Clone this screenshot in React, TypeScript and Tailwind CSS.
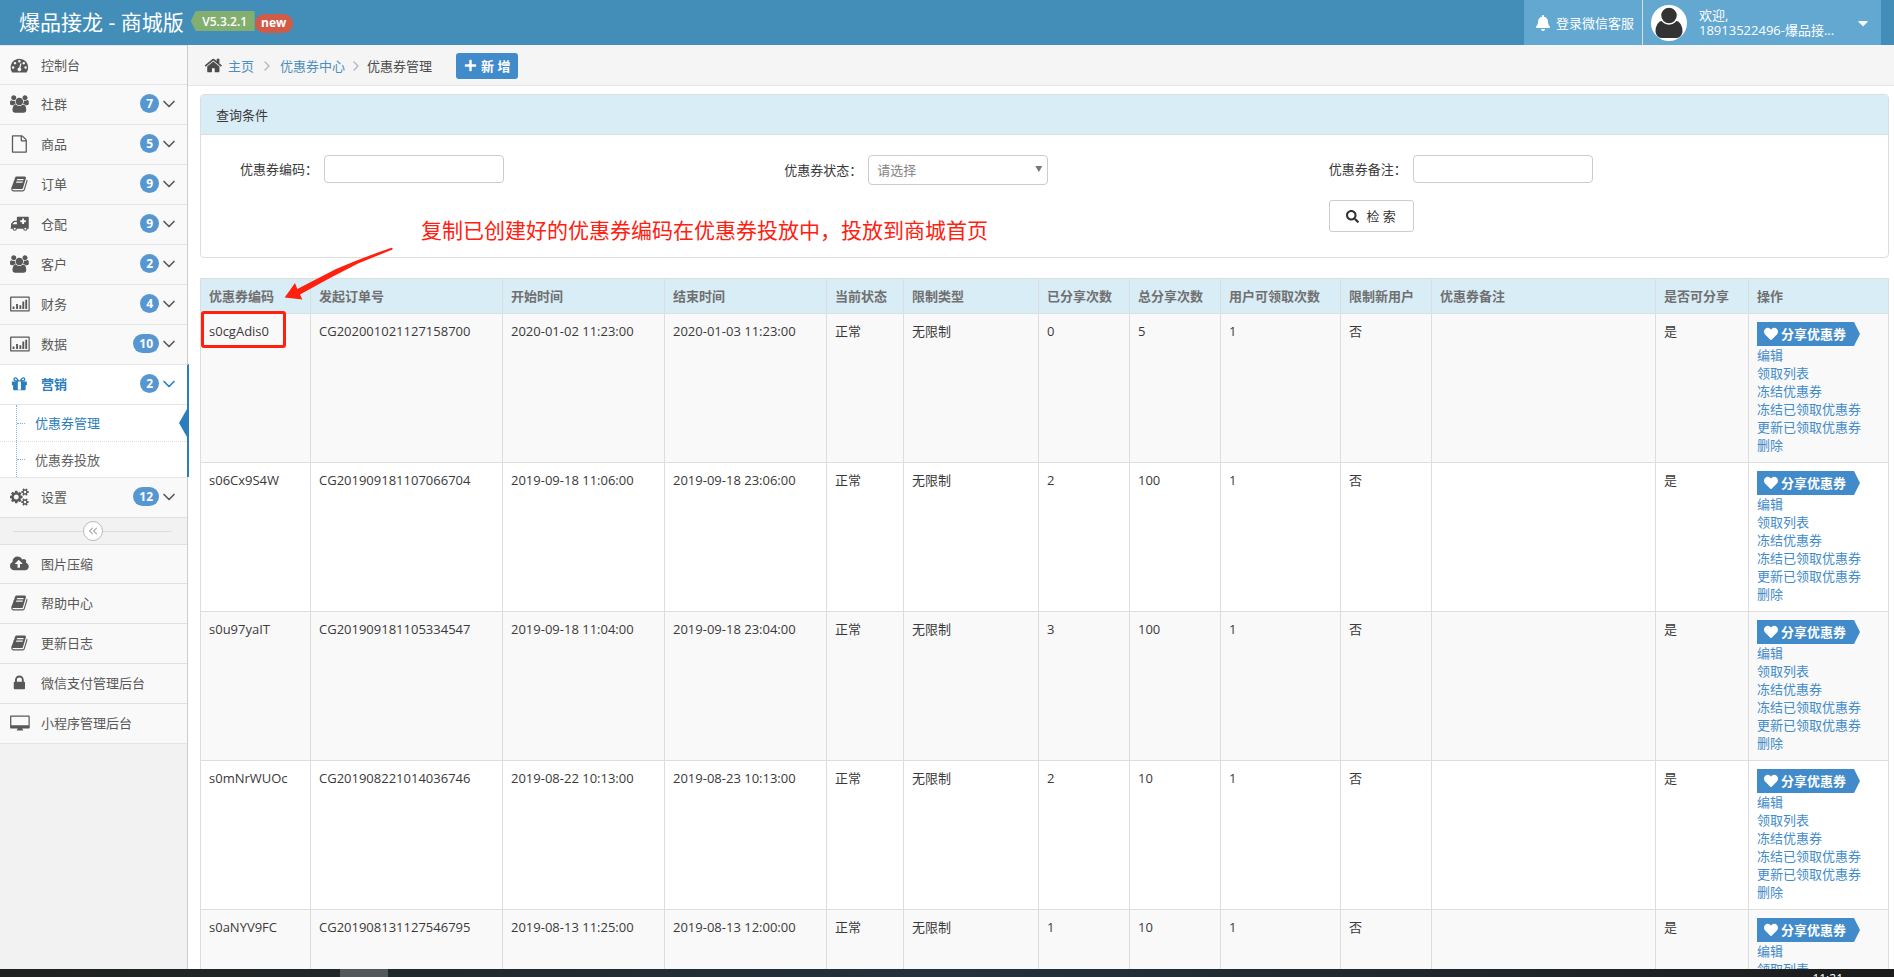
import type { ReactNode } from "react";
import { FaHeart, FaBell, FaPlus, FaSearch, FaCaretDown } from "react-icons/fa";
import { ChevronDown, ChevronRight, ChevronsLeft } from "lucide-react";

const ICONS = {
  dashboard:
    "M384 1152q0-53-37.5-90.5t-90.5-37.5-90.5 37.5-37.5 90.5 37.5 90.5 90.5 37.5 90.5-37.5 37.5-90.5zm192-448q0-53-37.5-90.5t-90.5-37.5-90.5 37.5-37.5 90.5 37.5 90.5 90.5 37.5 90.5-37.5 37.5-90.5zm428 481l101-382q6-26-7.5-48.5t-38.5-29.5-48 6.5-30 39.5l-101 382q-60 5-107 43.5t-63 98.5q-20 77 20 146t117 89 146-20 89-117q16-60-6-117t-72-91zm660-33q0-53-37.5-90.5t-90.5-37.5-90.5 37.5-37.5 90.5 37.5 90.5 90.5 37.5 90.5-37.5 37.5-90.5zm-640-640q0-53-37.5-90.5t-90.5-37.5-90.5 37.5-37.5 90.5 37.5 90.5 90.5 37.5 90.5-37.5 37.5-90.5zm448 192q0-53-37.5-90.5t-90.5-37.5-90.5 37.5-37.5 90.5 37.5 90.5 90.5 37.5 90.5-37.5 37.5-90.5zm320 448q0 261-141 483-19 29-54 29h-1402q-35 0-54-29-141-221-141-483 0-182 71-348t191-286 286-191 348-71 348 71 286 191 191 286 71 348z",
  group:
    "M529 896q-162 5-265 128h-134q-82 0-138-40.5t-56-118.5q0-353 124-353 6 0 43.5 21t97.5 42.5 119 21.5q67 0 133-23-5 37-5 66 0 159 90 290zm1071 637q0 120-73 189.5t-194 69.5h-874q-121 0-194-69.5t-73-189.5q0-53 3.5-103.5t14-109 26.5-108.5 43-97.5 62-81 85.5-53.5 111.5-20q10 0 43 21.5t73 48 107 48 135 21.5 135-21.5 107-48 73-48 43-21.5q61 0 111.5 20t85.5 53.5 62 81 43 97.5 26.5 108.5 14 109 3.5 103.5zm-1024-1277q0 106-75 181t-181 75-181-75-75-181 75-181 181-75 181 75 75 181zm704 384q0 159-112.5 271.5t-271.5 112.5-271.5-112.5-112.5-271.5 112.5-271.5 271.5-112.5 271.5 112.5 112.5 271.5zm576 225q0 78-56 118.5t-138 40.5h-134q-103-123-265-128 90-131 90-290 0-29-5-66 66 23 133 23 59 0 119-21.5t97.5-42.5 43.5-21q124 0 124 353zm-128-609q0 106-75 181t-181 75-181-75-75-181 75-181 181-75 181 75 75 181z",
  file: "M1596 380q28 28 48 76t20 88v1152q0 40-28 68t-68 28h-1344q-40 0-68-28t-28-68v-1600q0-40 28-68t68-28h896q40 0 88 20t76 48zm-444-244v376h376q-10-29-22-41l-313-313q-12-12-41-22zm384 1528v-1024h-416q-40 0-68-28t-28-68v-416h-768v1536h1280z",
  book: "M1703 478q40 57 18 129l-275 906q-19 64-76.5 107.5t-122.5 43.5h-923q-77 0-148.5-53.5t-99.5-131.5q-24-67-2-127 0-4 3-27t4-37q1-8-3-21.5t-3-19.5q2-11 8-21t16.5-23.5 16.5-23.5q23-38 45-91.5t30-91.5q3-10 .5-30t-.5-28q3-11 17-28t17-23q21-36 42-92t25-90q1-9-2.5-32t.5-28q4-13 22-30.5t22-22.5q19-26 42.5-84.5t27.5-96.5q1-8-3-25.5t-2-26.5q2-8 9-18t18-23 17-21q8-12 16.5-30.5t15-35 16-36 19.5-32 26.5-23.5 36-11.5 47.5 5.5l-1 3q38-9 51-9h761q74 0 114 56t18 130l-274 906q-36 119-71.5 153.5t-128.5 34.5h-869q-27 0-38 15-11 16-1 43 24 70 144 70h923q29 0 56-15.5t35-41.5l300-987q7-22 5-57 38 15 59 43zm-1064 2q-4 13 2 22.5t20 9.5h608q13 0 25.5-9.5t16.5-22.5l21-64q4-13-2-22.5t-20-9.5h-608q-13 0-25.5 9.5t-16.5 22.5zm-83 256q-4 13 2 22.5t20 9.5h608q13 0 25.5-9.5t16.5-22.5l21-64q4-13-2-22.5t-20-9.5h-608q-13 0-25.5 9.5t-16.5 22.5z",
  ambulance:
    "M700 150h1110q46 0 46 46v1180h-130a220 220 0 0 1-440 0H640a220 220 0 0 1-440 0H-10v-100h50V900q0-50 36-86l220-220q36-36 86-36h258V210q0-60 60-60zM160 920h480V680H400L160 910zM1180 330v192H988v190h192v192h190V712h192V522h-192V330zM420 1270a108 108 0 1 0 0 216 108 108 0 0 0 0-216zM1506 1270a108 108 0 1 0 0 216 108 108 0 0 0 0-216z",
  chart:
    "M20 128h1860q76 0 76 76v1384q0 76-76 76H20q-76 0-76-76V204q0-76 76-76zM72 256v1280h1760V256zM200 1152h192v256H200zM560 896h192v512H560zM900 1024h192v384H900zM1200 640h192v768h-192zM1500 448h192v960h-192z",
  gift: "M1056 1356V1472h-320V640h320zM560 512h120L560 352q-20-24-56-24-46 0-70 30t-24 60q0 94 150 94zm820-94q0-30-24-60t-70-30q-36 0-56 24L1110 512h120q150 0 150-94zm284 254v320q0 32-32 32h-96v416q0 96-96 96H352q-96 0-96-96v-416h-96q-32 0-32-32V672q0-32 32-32h440q-320 0-320-222 0-218 222-218 106 0 170 76l224 284 224-284q64-76 170-76 222 0 222 218 0 222-320 222h440q32 0 32 32z",
  cogs: "M832 896q0-106-75-181t-181-75-181 75-75 181 75 181 181 75 181-75 75-181zm768 512q0-52-38-90t-90-38-90 38-38 90q0 53 37.5 90.5t90.5 37.5 90.5-37.5 37.5-90.5zm0-1024q0-52-38-90t-90-38-90 38-38 90q0 53 37.5 90.5t90.5 37.5 90.5-37.5 37.5-90.5zm-384 421v185q0 10-7 19.5t-16 10.5l-155 24q-11 35-32 76 34 48 90 115 7 11 7 20 0 12-7 19-23 30-82.5 89.5t-78.5 59.5q-11 0-21-7l-115-90q-37 19-77 31-11 108-23 155-7 24-30 24h-186q-11 0-20-7.5t-10-17.5l-23-153q-34-10-75-31l-118 89q-7 7-20 7-11 0-21-8-144-133-144-160 0-9 7-19 10-14 41-53t47-61q-23-44-35-82l-152-24q-10-1-17-9.5t-7-19.5v-185q0-10 7-19.5t16-10.5l155-24q11-35 32-76-34-48-90-115-7-11-7-20 0-12 7-20 22-30 82-89t79-59q11 0 21 7l115 90q34-18 77-32 11-108 23-154 7-24 30-24h186q11 0 20 7.5t10 17.5l23 153q34 10 75 31l118-89q8-7 20-7 11 0 21 8 144 133 144 160 0 8-7 19-12 16-42 54t-45 60q23 48 34 82l152 23q10 2 17 10.5t7 19.5zm640 533v140q0 16-149 31-12 27-30 52 51 113 51 138 0 4-4 7-122 71-124 71-8 0-46-47t-52-68q-20 2-30 2t-30-2q-14 21-52 68t-46 47q-2 0-124-71-4-3-4-7 0-25 51-138-18-25-30-52-149-15-149-31v-140q0-16 149-31 13-29 30-52-51-113-51-138 0-4 4-7 4-2 35-20t59-34 30-16q8 0 46 46.5t52 67.5q20-2 30-2t30 2q51-71 92-112l6-2q4 0 124 70 4 3 4 7 0 25-51 138 17 23 30 52 149 15 149 31zm0-1024v140q0 16-149 31-12 27-30 52 51 113 51 138 0 4-4 7-122 71-124 71-8 0-46-47t-52-68q-20 2-30 2t-30-2q-14 21-52 68t-46 47q-2 0-124-71-4-3-4-7 0-25 51-138-18-25-30-52-149-15-149-31v-140q0-16 149-31 13-29 30-52-51-113-51-138 0-4 4-7 4-2 35-20t59-34 30-16q8 0 46 46.5t52 67.5q20-2 30-2t30 2q51-71 92-112l6-2q4 0 124 70 4 3 4 7 0 25-51 138 17 23 30 52 149 15 149 31z",
  cloud:
    "M1216 864q0-14-9-23l-352-352q-9-9-23-9t-23 9l-351 351q-10 12-10 24 0 14 9 23t23 9h224v352q0 13 9.5 22.5t22.5 9.5h192q13 0 22.5-9.5t9.5-22.5v-352h224q13 0 22.5-9.5t9.5-22.5zm640 288q0 159-112.5 271.5t-271.5 112.5h-1088q-185 0-316.5-131.5t-131.5-316.5q0-130 70-240t188-165q-2-30-2-43 0-212 150-362t362-150q156 0 285.5 87t188.5 231q71-62 166-62 106 0 181 75t75 181q0 76-41 138 130 31 213.5 135.5t83.5 238.5z",
  lock: "M640 768h512v-192q0-106-75-181t-181-75-181 75-75 181v192zm832 96v576q0 40-28 68t-68 28h-960q-40 0-68-28t-28-68v-576q0-40 28-68t68-28h32v-192q0-184 132-316t316-132 316 132 132 316v192h32q40 0 68 28t28 68z",
  desktop:
    "M20 128h1860q76 0 76 76v1184q0 76-76 76h-700q0 60 90 130 20 20 10 50 0 20-30 20H670q-30 0-40-20-10-30 10-50 90-70 90-130H20q-76 0-76-76V204q0-76 76-76zM72 256v860h1760V256z",
  home: "M1472 992v480q0 26-19 45t-45 19h-384v-384h-256v384h-384q-26 0-45-19t-19-45v-480q0-1 .5-3t.5-3l575-474 575 474q1 2 1 6zm223-69l-62 74q-8 9-21 11h-3q-13 0-21-7l-692-577-692 577q-12 8-24 7-13-2-21-11l-62-74q-8-10-7-23.5t11-21.5l719-599q32-26 76-26t76 26l244 204v-195q0-14 9-23t23-9h192q14 0 23 9t9 23v408l219 182q10 8 11 21.5t-7 23.5z",
};

type IconName = keyof typeof ICONS;

function Icon({ name, className }: { name: IconName; className: string }) {
  return (
    <svg viewBox="-64 0 2048 1792" className={className} fill="currentColor" fillRule="evenodd" aria-hidden="true">
      <path d={ICONS[name]} />
    </svg>
  );
}

const menu: { icon: IconName; label: string; count?: number; active?: boolean }[] = [
  { icon: "dashboard", label: "控制台" },
  { icon: "group", label: "社群", count: 7 },
  { icon: "file", label: "商品", count: 5 },
  { icon: "book", label: "订单", count: 9 },
  { icon: "ambulance", label: "仓配", count: 9 },
  { icon: "group", label: "客户", count: 2 },
  { icon: "chart", label: "财务", count: 4 },
  { icon: "chart", label: "数据", count: 10 },
  { icon: "gift", label: "营销", count: 2, active: true },
  { icon: "cogs", label: "设置", count: 12 },
];

const tools: { icon: IconName; label: string }[] = [
  { icon: "cloud", label: "图片压缩" },
  { icon: "book", label: "帮助中心" },
  { icon: "book", label: "更新日志" },
  { icon: "lock", label: "微信支付管理后台" },
  { icon: "desktop", label: "小程序管理后台" },
];

const columns = [
  { title: "优惠券编码", width: "w-[110px]" },
  { title: "发起订单号", width: "w-[192px]" },
  { title: "开始时间", width: "w-[162px]" },
  { title: "结束时间", width: "w-[162px]" },
  { title: "当前状态", width: "w-[77px]" },
  { title: "限制类型", width: "w-[135px]" },
  { title: "已分享次数", width: "w-[91px]" },
  { title: "总分享次数", width: "w-[91px]" },
  { title: "用户可领取次数", width: "w-[120px]" },
  { title: "限制新用户", width: "w-[91px]" },
  { title: "优惠券备注", width: "" },
  { title: "是否可分享", width: "w-[93px]" },
  { title: "操作", width: "w-[140px]" },
];

const coupons = [
  ["s0cgAdis0", "CG202001021127158700", "2020-01-02 11:23:00", "2020-01-03 11:23:00", "正常", "无限制", "0", "5", "1", "否", "", "是"],
  ["s06Cx9S4W", "CG201909181107066704", "2019-09-18 11:06:00", "2019-09-18 23:06:00", "正常", "无限制", "2", "100", "1", "否", "", "是"],
  ["s0u97yaIT", "CG201909181105334547", "2019-09-18 11:04:00", "2019-09-18 23:04:00", "正常", "无限制", "3", "100", "1", "否", "", "是"],
  ["s0mNrWUOc", "CG201908221014036746", "2019-08-22 10:13:00", "2019-08-23 10:13:00", "正常", "无限制", "2", "10", "1", "否", "", "是"],
  ["s0aNYV9FC", "CG201908131127546795", "2019-08-13 11:25:00", "2019-08-13 12:00:00", "正常", "无限制", "1", "10", "1", "否", "", "是"],
];

const actions = ["编辑", "领取列表", "冻结优惠券", "冻结已领取优惠券", "更新已领取优惠券", "删除"];

function Header() {
  return (
    <header className="flex h-[45px] shrink-0 items-stretch justify-between bg-[#438eb9] pr-[13px] text-white">
      <div className="flex items-start pl-[19px]">
        <a href="#" className="text-[21px] leading-[44px] whitespace-nowrap">
          爆品接龙 - 商城版
        </a>
        <span className="mt-[11px] ml-[7px] h-5 w-16 bg-[#82af6f] pl-1 text-center text-xs leading-[22px] font-semibold [clip-path:polygon(5px_0,100%_0,100%_100%,5px_100%,0_50%)]">
          V5.3.2.1
        </span>
        <span className="mt-[14px] h-[19px] w-[38px] rounded-full bg-[#d15b47] text-center text-xs leading-[18px] font-bold">
          new
        </span>
      </div>
      <div className="flex bg-[#62a8d1]">
        <a href="#" className="flex w-[118px] items-center gap-[5px] pl-[11px] whitespace-nowrap">
          <FaBell size={16} />
          登录微信客服
        </a>
        <button type="button" className="flex w-[239px] items-center border-l border-[#ddd] pl-2 text-left">
          <svg viewBox="0 0 36 36" className="h-9 w-9" aria-hidden="true">
            <circle cx="18" cy="18" r="18" fill="#fff" />
            <path d="M4.500 27q0-10 7-11.500h13q7 1.500 7 11.500-1.500 6-6.500 6H11q-5 0-6.500-6z" fill="#333" />
            <circle cx="18" cy="10.500" r="8.500" fill="#333" stroke="#fff" strokeWidth="1.500" />
          </svg>
          <span className="ml-3 w-[140px] leading-[15px] whitespace-nowrap">
            <small className="block text-[13px] leading-[15px]">欢迎,</small>
            18913522496-爆品接...
          </span>
          <FaCaretDown size={16} className="ml-4" />
        </button>
      </div>
    </header>
  );
}

function Submenu() {
  return (
    <ul className="relative border-t border-[#e5e5e5] bg-white before:absolute before:inset-y-0 before:left-4 before:border-l before:border-dotted before:border-[#7fb1d6]">
      <li className="relative flex h-9 items-center before:absolute before:left-[17px] before:w-2 before:border-t before:border-dotted before:border-[#7fb1d6]">
        <a href="#" className="pl-[35px] text-[#2b7dbc]">优惠券管理</a>
        {/* arrow that marks the open page */}
        <span className="absolute top-1 right-0 h-7 w-2 bg-[#2b7dbc] [clip-path:polygon(100%_0,100%_100%,0_50%)]" />
      </li>
      <li className="relative flex h-9 items-center border-t border-dotted border-[#ddd] before:absolute before:left-[17px] before:w-2 before:border-t before:border-dotted before:border-[#7fb1d6]">
        <a href="#" className="pl-[35px] text-[#616161]">优惠券投放</a>
      </li>
    </ul>
  );
}

function Sidebar() {
  return (
    <nav className="w-[188px] shrink-0 border-r border-[#ccc] bg-[#f2f2f2] text-[#585858]">
      <ul>
        {menu.map((item) => (
          <li
            key={item.label}
            className={
              item.active
                ? "-mr-[2px] border-t border-r-2 border-t-[#e5e5e5] border-r-[#2b7dbc] bg-white"
                : "border-t border-[#e5e5e5] bg-[#f9f9f9] first:h-[39px]"
            }
          >
            <a
              href="#"
              className={
                item.active
                  ? "flex h-[39px] items-center pr-2 pb-[2px] pl-[10px] font-bold text-[#2b7dbc]"
                  : "flex h-[39px] items-center pr-2 pb-[2px] pl-[10px]"
              }
            >
              <Icon name={item.icon} className="mr-[11px] h-[18px] w-5" />
              {item.label}
              {item.count && (
                <>
                  <span className="ml-auto rounded-full bg-[#5797d1] px-[6px] text-[12px] leading-[19px] font-bold text-white">
                    {item.count}
                  </span>
                  <ChevronDown size={20} strokeWidth={2} />
                </>
              )}
            </a>
            {item.active && <Submenu />}
          </li>
        ))}
      </ul>
      <div className="flex h-[27px] items-center border-t border-[#e0e0e0] pr-[15px] pl-[13px]">
        <span className="h-px flex-1 bg-[#ddd]" />
        <button type="button" aria-label="收起菜单" className="flex h-5 w-5 items-center justify-center rounded-full border border-[#bbb] bg-white text-[#aaa]">
          <ChevronsLeft size={14} />
        </button>
        <span className="h-px flex-1 bg-[#ddd]" />
      </div>
      <ul className="border-b border-[#e5e5e5]">
        {tools.map((item) => (
          <li key={item.label} className="border-t border-[#e0e0e0] bg-[#f9f9f9] first:h-[39px]">
            <a href="#" className="flex h-[39px] items-center pb-[2px] pl-[10px]">
              <Icon name={item.icon} className="mr-[11px] h-[18px] w-5" />
              {item.label}
            </a>
          </li>
        ))}
      </ul>
    </nav>
  );
}

function Breadcrumb() {
  return (
    <div className="flex h-[41px] items-center border-b border-[#e5e5e5] bg-[#f5f5f5] pt-px pl-[15px] text-[#4c4c4c]">
      <Icon name="home" className="h-[19px] w-[22px]" />
      <a href="#" className="ml-[3px] text-[#4c8fbd]">主页</a>
      <ChevronRight size={16} className="mx-[5px] text-[#b2b6bf]" />
      <a href="#" className="text-[#4c8fbd]">优惠券中心</a>
      <ChevronRight size={16} className="mx-[3px] text-[#b2b6bf]" />
      <span>优惠券管理</span>
      <button type="button" className="ml-6 flex h-[26px] items-center gap-1 rounded-[3px] bg-[#428bca] px-2 font-bold whitespace-nowrap text-white">
        <FaPlus size={13} />
        新 增
      </button>
    </div>
  );
}

function Field({ id, label, children }: { id: string; label: string; children: ReactNode }) {
  return (
    <div className="flex items-center">
      <label htmlFor={id} className="w-[84px] text-[#393939]">{label}：</label>
      {children}
    </div>
  );
}

function SearchPanel() {
  return (
    <form className="rounded-[4px] border border-[#ddd]">
      <h2 className="flex h-10 items-center border-b border-[#ddd] bg-[#d9edf7] pl-[15px] text-[#393939]">查询条件</h2>
      <div className="grid grid-cols-3 items-start gap-y-[15px] pt-5 pr-[15px] pb-[25px] pl-[39px]">
        <Field id="code" label="优惠券编码">
          <input id="code" type="text" className="h-7 w-[180px] rounded-[4px] border border-[#ccc] px-2" />
        </Field>
        <Field id="status" label="优惠券状态">
          <span className="relative">
            <select id="status" className="block h-[30px] w-[180px] appearance-none rounded-[4px] border border-[#ccc] bg-white px-2 text-[#858585]">
              <option>请选择</option>
            </select>
            <span className="pointer-events-none absolute top-[11px] right-[6px] h-[6px] w-[7px] bg-[#777] [clip-path:polygon(0_0,100%_0,50%_100%)]" />
          </span>
        </Field>
        <Field id="remark" label="优惠券备注">
          <input id="remark" type="text" className="h-7 w-[180px] rounded-[4px] border border-[#ccc] px-2" />
        </Field>
        <button type="button" className="col-start-3 flex h-8 w-[85px] items-center justify-center gap-[7px] rounded-[3px] border border-[#ccc] text-[#333]">
          <FaSearch size={13} />
          检 索
        </button>
      </div>
    </form>
  );
}

function CouponTable() {
  return (
    <table className="mt-5 w-full table-fixed border-collapse text-left text-[#393939]">
      <colgroup>
        {columns.map((c) => (
          <col key={c.title} className={c.width} />
        ))}
      </colgroup>
      <thead>
        <tr className="h-[35px] bg-[#d9edf7] text-[#707070]">
          {columns.map((c) => (
            <th key={c.title} className="border border-[#ddd] px-2 font-bold whitespace-nowrap">{c.title}</th>
          ))}
        </tr>
      </thead>
      <tbody>
        {coupons.map((row) => (
          <tr key={row[0]} className="align-top odd:bg-[#f9f9f9]">
            {row.map((cell, i) => (
              <td key={i} className="border border-[#ddd] p-2 leading-[18px] whitespace-nowrap">{cell}</td>
            ))}
            <td className="border border-[#ddd] p-2 whitespace-nowrap">
              <a
                href="#"
                className="flex h-6 w-[103px] items-center gap-[3px] bg-[#428bca] pl-[7px] font-semibold text-white [clip-path:polygon(0_0,97px_0,100%_50%,97px_100%,0_100%)]"
              >
                <FaHeart size={14} />
                分享优惠券
              </a>
              {actions.map((action) => (
                <a key={action} href="#" className="block leading-[18px] text-[#428bca]">{action}</a>
              ))}
            </td>
          </tr>
        ))}
      </tbody>
    </table>
  );
}

// red callout drawn over the search panel and the first row
function Callout() {
  return (
    <>
      <p className="absolute top-[121px] left-[221px] text-[21px] leading-[30px] whitespace-nowrap text-[#ff2010]">
        复制已创建好的优惠券编码在优惠券投放中，投放到商城首页
      </p>
      <svg viewBox="0 0 110 54" className="absolute top-[153px] left-[84px] h-[54px] w-[110px]" fill="#ff2010" aria-hidden="true">
        <path d="M.700 50.500L11 36l2.300 6L52 22Q80 10 107.500.700q2 .500.500 2L74 16.500 46 31 16 47.500l2.300 5z" />
      </svg>
      <span className="absolute top-[217px] left-px h-[37px] w-[85px] rounded-[3px] border-3 border-[#ff2010]" />
    </>
  );
}

export default function App() {
  return (
    <div className="flex h-screen flex-col overflow-hidden bg-white font-['Open_Sans','Noto_Sans_CJK_SC',sans-serif] text-[13px] leading-[18px]">
      <Header />
      <div className="flex min-h-0 flex-1 overflow-hidden">
        <Sidebar />
        <main className="min-w-0 flex-1">
          <Breadcrumb />
          <div className="relative mt-2 mr-[5px] ml-3">
            <SearchPanel />
            <CouponTable />
            <Callout />
          </div>
        </main>
      </div>
      <footer className="flex h-2 shrink-0 justify-between overflow-hidden bg-linear-to-r from-[#1f211f] via-[#24323c] to-[#1c1c1c] text-white">
        <span className="ml-[340px] w-12 bg-[#55585b]" />
        <time className="mt-[2px] mr-[51px] text-xs leading-4">11:21</time>
      </footer>
    </div>
  );
}
